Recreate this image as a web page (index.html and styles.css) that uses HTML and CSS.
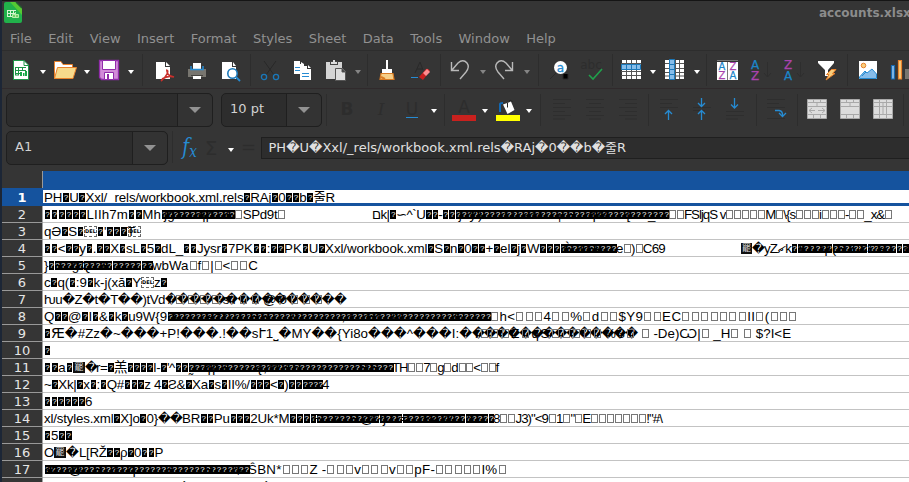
FILE: index.html
```html
<!DOCTYPE html>
<html lang="en">
<head>
<meta charset="utf-8">
<title>accounts.xlsx</title>
<link rel="stylesheet" href="styles.css">
</head>
<body>
<div class="window">
<header class="titlebar">
<svg class="logo" width="18" height="21" viewBox="0 0 18 21"><path fill="#21b14b" d="M2 0H12L18 6V19Q18 21 16 21H2Q0 21 0 19V2Q0 0 2 0Z"/><path fill="#55c934" d="M6 0H12L18 6V13Z"/><path stroke="#235b30" stroke-width="1.5" d="M12 0L18 6"/><path stroke="#d6f5d2" fill="none" d="M3 8.500H12M3 11.500H12M3 14.500H9M3.500 8V14M6.500 8V14M9.500 8V14"/><path fill="#6fd165" stroke="#b7eea9" d="M8.500 12.500H14.500V15.500H8.500ZM11.500 10V15"/></svg>
<span class="title">accounts.xlsx</span>
</header>
<nav class="menu"><span>File</span><span>Edit</span><span>View</span><span>Insert</span><span>Format</span><span>Styles</span><span>Sheet</span><span>Data</span><span>Tools</span><span>Window</span><span>Help</span></nav>
<div class="toolbar standard">
<svg class="i" viewBox="0 0 24 24"><path fill="#fff" stroke="#1d9546" d="M4.500 2.500H15L19.500 7V21.500H4.500Z"/><path fill="none" stroke="#1d9546" d="M15 2.500V7.500H19.500M6 9.500H17M6 12.500H17M6 15.500H12M6.500 9V17M9.500 9V17M13.500 9V13M6 17H10"/><path fill="#18a846" d="M11 14h2v4h-2zM14 15h1.500v3H14zM16 13h2v5h-2z"/></svg><i class="dd"></i>
<svg class="i" viewBox="0 0 24 24"><path fill="#fff" stroke="#e8812b" d="M1.500 20.500V3.500H8L10 6.500H19.500V10"/><path fill="#f7da8c" stroke="#e8812b" d="M1.500 20.500L4.500 9.500H23.500L20 20.500Z"/></svg><i class="dd"></i>
<svg class="i" viewBox="0 0 24 24"><path fill="#d18bd8" stroke="#912caa" stroke-width="1.300" d="M2.500 2.500H21.500V21.500H4.500L2.500 19.500Z"/><path fill="#fff" stroke="#912caa" d="M5.500 2.500H18.500V11.500H5.500ZM7.500 14.500H16.500V21.500H7.500Z"/><path fill="#912caa" d="M10 16h2v5h-2z"/></svg><i class="dd"></i>
<s class="w11"></s>
<svg class="i" viewBox="0 0 24 24"><path fill="#fff" d="M4 4H13V9H18V21H4ZM14 4L18 8H14Z"/><path fill="none" stroke="#c9302c" stroke-width="1.600" d="M14 12Q17 12 15 16Q13 20 9 23M15 12Q14 17 22 19Q16 17 10 21"/></svg>
<svg class="i" viewBox="0 0 24 24"><path fill="#77756f" d="M3 11H21V19H3Z"/><path fill="#fff" d="M8 5H16V11H8ZM8 18H16V21H8Z"/><path fill="none" stroke="#268bd2" stroke-width="1.500" d="M6 8V11.500H18V8"/><path stroke="#45433f" d="M6 17.500H18"/></svg>
<svg class="i" viewBox="0 0 24 24"><path fill="#fff" d="M4 4H14V9H18V21H4ZM15 4L18 8H15Z"/><circle cx="14.500" cy="15.500" r="4.700" fill="#fff" stroke="#1b78b9" stroke-width="1.600"/><path stroke="#268bd2" stroke-width="1.800" d="M18 19L22 23"/></svg>
<s class="w7"></s>
<svg class="i" viewBox="0 0 24 24"><path stroke="#282828" fill="none" d="M6 3L16 17M18 3L8 17"/><g fill="none" stroke="#1b78b9" stroke-width="1.300"><circle cx="6" cy="19" r="2.600"/><circle cx="18" cy="19" r="2.600"/></g></svg>
<svg class="i" viewBox="0 0 24 24"><path fill="#fff" d="M3 3H9V6H13V16H3ZM10 4L13 6H10ZM9 8H16V11H20V22H9ZM17 7L20 10H17Z"/><path stroke="#268bd2" d="M4 9.500H9M4 12.500H9M11 15.500H18M11 18.500H18"/></svg>
<svg class="i" viewBox="0 0 24 24"><path fill="#d4d4d4" d="M2 4H18V21H2Z"/><path fill="#444" d="M6 3H14V7H6Z"/><path fill="#ddd" d="M7 4h2V2h2v2h2v2H7z"/><path fill="#ddd" stroke="#555" d="M11.500 10.500H18L21.500 14V22.500H11.500ZM18 10V14H22"/></svg><i class="dd off"></i>
<s class="w7"></s>
<svg class="i" viewBox="0 0 24 24"><path fill="#fff" d="M11 2h2v9h4v4H7v-4h4z"/><path fill="#f7cf88" stroke="#d97b24" stroke-width="1.200" d="M6 15.500H18L19 21.500H5Z"/><path stroke="#d97b24" stroke-width="2" d="M6 19L10 21"/></svg>
<svg class="i" viewBox="0 0 24 24"><path stroke="#292929" fill="none" d="M7 15L12 4L15 12M9 11H14"/><path stroke="#268bd2" d="M3 19.500H10"/><path fill="#c81f1f" d="M11 19L18 11Q20 10 22 13L15 22Z"/><path fill="#ff8c90" d="M15 15L19 11L22 14L18 18Z"/></svg>
<s class="w8"></s>
<svg class="i" viewBox="0 0 24 24"><path fill="none" stroke="#b9b9b9" stroke-width="1.400" d="M2.500 4V12.500H10M3 12L9 5Q14 .5 18 5Q21 9 17 14L11 21"/></svg><i class="dd off"></i>
<svg class="i" viewBox="0 0 24 24"><path fill="none" stroke="#b9b9b9" stroke-width="1.400" d="M19.500 4V12.500H12M19 12L13 5Q8 .5 4 5Q1 9 5 14L11 21"/></svg><i class="dd off"></i>
<s class="w11"></s>
<svg class="i" viewBox="0 0 24 24"><path stroke="#292929" d="M2 21L8 15M15 16V21H20V16"/><circle cx="12.500" cy="9.500" r="6.500" fill="#fff"/><text x="12.500" y="13.500" class="find">a</text></svg>
<svg class="i" viewBox="0 0 24 24"><text x="10" y="11" class="abc">abc</text><path fill="none" stroke="#20a04b" stroke-width="1.600" d="M8 17L12 21L21 11"/></svg>
<s class="w5"></s>
<svg class="i" viewBox="0 0 24 24"><path fill="#fff" d="M3 2H22V21H3Z"/><path stroke="#555" d="M2 5.500H22M2 13.500H22M2 17.500H22M7.500 2V21M12.500 2V21M17.500 2V21"/><path fill="#87bdea" stroke="#1b78b9" d="M2.500 6.500H21.500V11.500H2.500ZM7.500 6V11M12.500 6V11M17.500 6V11"/></svg><i class="dd"></i>
<svg class="i" viewBox="0 0 24 24"><path fill="#fff" d="M2 2H21V21H2Z"/><path stroke="#555" d="M2 5.500H21M2 10.500H21M2 14.500H21M2 18H21M6.500 2V21M12.500 2V21M16.500 2V21"/><path fill="#87bdea" stroke="#1b78b9" d="M6.500 1.500H11.500V21.500H6.500ZM6 6.500H11M6 11.500H11M6 16.500H11"/></svg><i class="dd"></i>
<s class="w8"></s>
<svg class="i" viewBox="0 0 24 24"><path fill="#fff" d="M2 4H23V22H2Z"/><path stroke="#777" d="M2 2.500H23M12.500 4V22"/><g class="az"><text x="7" y="12">A</text><text x="18" y="21">A</text><text x="7" y="21" class="z">Z</text><text x="18" y="12" class="z">Z</text></g></svg>
<svg class="i" viewBox="0 0 24 24"><g class="az big"><text x="7" y="11">A</text><text x="7" y="22" class="z">Z</text></g><path class="faint" d="M19.500 4V19M16 15L19.500 19L23 15"/></svg>
<svg class="i" viewBox="0 0 24 24"><g class="az big"><text x="7" y="11" class="z">Z</text><text x="7" y="22">A</text></g><path class="faint" d="M19.500 4V19M16 15L19.500 19L23 15"/></svg>
<svg class="i" viewBox="0 0 24 24"><path fill="#fff" d="M4 3H20V5L14 12V18H11V12L4 5Z"/><path fill="#f8ce7d" stroke="#e8812b" d="M17.500 11.500H22L18.500 15.500H21L12 22L15 16.500H12.500Z"/></svg>
<s class="w9"></s>
<svg class="i" viewBox="0 0 24 24"><path fill="#fff" d="M3 3H21V21H3Z"/><circle cx="7.500" cy="7.500" r="2.300" fill="#f8ce7d" stroke="#e8812b"/><path fill="#87bdea" stroke="#268bd2" d="M3.500 20.500V19L9 13L11 15L16 11L20.500 16V20.500ZM6 18L10 14"/></svg>
<svg class="i" viewBox="0 0 24 24"><path fill="#87bdea" stroke="#1768b0" stroke-width="1.200" d="M2.500 7.500H5.500V21H2.500Z"/><path fill="#f8ce7d" stroke="#e8812b" stroke-width="1.200" d="M9.500 2.500H12.500V21H9.500Z"/><path fill="#77756f" d="M16 11H20V21H16Z"/></svg>
</div>
<div class="toolbar formatting">
<div class="combo font"><span></span><b></b></div>
<div class="combo size"><span>10 pt</span><b></b></div>
<s class="w8h"></s>
<svg class="i" viewBox="0 0 24 24"><text x="12" y="18" class="glyph bold">B</text></svg>
<svg class="i" viewBox="0 0 24 24"><text x="13" y="18" class="glyph ital">I</text></svg>
<svg class="i" viewBox="0 0 24 24"><text x="11" y="18" class="glyph">U</text><path stroke="#268bd2" d="M5 20.500H17"/></svg><i class="dd"></i>
<s class="w7"></s>
<svg class="i" viewBox="0 0 24 24"><text x="12" y="16" class="glyph">A</text><path fill="#c9211e" d="M0 18H24V24H0Z"/></svg><i class="dd"></i>
<svg class="i" viewBox="0 0 24 24"><path fill="#ff0" d="M0 18H24V24H0Z"/><path fill="none" stroke="#1268b3" stroke-width="2" d="M4 15V7Q4 6 7 6"/><path fill="#fff" d="M7 7.500L15 4.500L18.500 13L11.500 17Z"/><path fill="none" stroke="#242424" d="M11.500 10.500V6M13 4Q15 2 16.500 5"/></svg><i class="dd"></i>
<s class="w10"></s>
<svg class="i" viewBox="0 0 24 24"><path class="faint" d="M3 2.500H21M3 6.500H15M3 10.500H21M3 14.500H15M3 18.500H21M3 22H15"/></svg>
<svg class="i" viewBox="0 0 24 24"><path class="faint" d="M3 2.500H21M6 6.500H18M3 10.500H21M6 14.500H18M3 18.500H21M6 22H18"/></svg>
<svg class="i" viewBox="0 0 24 24"><path class="faint" d="M3 2.500H21M9 6.500H21M3 10.500H21M9 14.500H21M3 18.500H21M9 22H21"/></svg>
<s class="w8"></s>
<svg class="i" viewBox="0 0 24 24"><path class="faint" d="M3 2.500H21M3 6.500H15M3 10.500H21"/><path class="arrow" d="M11.500 23V13.500M8 17L11.500 13.500L15 17"/></svg>
<svg class="i" viewBox="0 0 24 24"><path class="faint" d="M3 10.500H21M3 13.500H15"/><path class="arrow" d="M11.500 1V9M8 6L11.500 9.500L15 6M11.500 23V14M8 17L11.500 13.500L15 17"/></svg>
<svg class="i" viewBox="0 0 24 24"><path class="faint" d="M3 14.500H21M3 18.500H21M3 22H15"/><path class="arrow" d="M11.500 1V11M8 7.500L11.500 11L15 7.500"/></svg>
<s class="w10"></s>
<svg class="i" viewBox="0 0 24 24"><path class="faint" d="M1 2.500H19M1 6.500H13M1 10.500H19M1 21.500H19"/><path class="arrow" d="M9 13.500H13Q17 14 16.500 19M13 16L16.500 19.500L20 16"/></svg>
<s class="w6"></s>
<svg class="i" viewBox="0 0 24 24"><path class="cells" d="M2.500 2.500H21.500V21.500H2.500ZM2 5.500H22M2 9.500H22M2 17.500H22M8.500 2V5M15.500 2V5M8.500 17V22M15.500 17V22M12 5V9"/><path class="cellarrow" d="M4 13.500H10M7 11L4 13.500L7 16M13 13.500H20M17 11L20 13.500L17 16"/></svg>
<svg class="i" viewBox="0 0 24 24"><path class="cells" d="M2.500 2.500H21.500V21.500H2.500ZM2 5.500H22M2 9.500H22M2 17.500H22M8.500 2V5M15.500 2V5M8.500 17V22M15.500 17V22M12 5V9"/></svg>
<svg class="i" viewBox="0 0 24 24"><path class="cells" d="M2.500 2.500H21.500V21.500H2.500ZM2 5.500H22M2 9.500H22M2 17.500H22M8.500 2V22M15.500 2V22M12 5V17"/></svg>
<s class="w8"></s>
</div>
<div class="formula">
<div class="combo name"><span>A1</span><b></b></div>
<s class="w8"></s>
<div class="fx">f<sub>x</sub></div><div class="sigma">Σ</div><i class="dd"></i><div class="eq">=</div>
<div class="input">PH�U�Xxl/_rels/workbook.xml.rels�RAj�0��b�줄R</div>
</div>
<div class="colhead"><div class="corner"></div><div class="col"></div></div>
<main class="sheet" id="sheet"></main>
</div>
<script src="sheet.js"></script>
</body>
</html>
```
FILE: styles.css
```css
* { box-sizing: border-box; }
body { margin: 0; width: 909px; height: 482px; overflow: hidden; background: #353535; font: 13px "DejaVu Sans", "Noto Sans CJK KR", sans-serif; }
.window { height: 482px; border-left: 2px solid #1c2636; overflow: hidden; display: flex; flex-direction: column; }
.titlebar { height: 26px; flex: none; border-top: 1px solid #151515; display: flex; justify-content: space-between; padding-left: 2px; color: #8c8c8c; overflow: hidden; }
.logo { margin-top: 1px; flex: none; }
.title { font: bold 12px/24px "DejaVu Sans", sans-serif; width: 90px; white-space: nowrap; flex: none; overflow: hidden; }
.menu { height: 25px; flex: none; display: flex; gap: 16.4px; padding-left: 8px; line-height: 25px; color: #919191; border-bottom: 1px solid #2d2d2d; }
.toolbar { display: flex; flex: none; align-items: center; overflow: hidden; }
.standard { height: 38px; padding-left: 2.5px; border-bottom: 1px solid #302a2c; }
.formatting { height: 41px; padding-left: 4px; }
.i { width: 24px; height: 24px; margin: 0 4.5px; flex: none; overflow: visible; }
.formatting .i { margin: 0 5px 2px 4px; }
.dd { width: 11px; flex: none; display: flex; justify-content: center; }
.dd::after { content: ""; margin-top: 4px; border: 3.5px solid transparent; border-top: 4px solid #fff; border-bottom: 0; }
.formatting .dd::after { margin: 2px 2px 0 0; }
.off::after { border-top-color: #858585; }
s { height: 32px; flex: none; background: linear-gradient(#2d2d2d, #2d2d2d) center / 1px 100% no-repeat; }
.w5 { width: 5px; } .w6 { width: 6px; } .w7 { width: 7px; } .w8 { width: 8px; } .w8h { width: 8.5px; }
.w9 { width: 9px; } .w10 { width: 10px; } .w11 { width: 11px; }
.combo { height: 34px; flex: none; display: flex; border: 1px solid #1f1f1f; border-radius: 5px; background: #2d2d2d; color: #d2d2d2; }
.combo span { flex: 1; line-height: 30px; padding-left: 8px; }
.combo b { width: 35px; border-left: 1px solid #1f1f1f; background: #333; border-radius: 0 5px 5px 0; display: flex; align-items: center; justify-content: center; }
.combo b::after { content: ""; border: 6px solid transparent; border-top-color: #929292; border-bottom: 0; }
.font { width: 207px; margin-right: 8px; }
.size { width: 101px; }
.name { width: 162px; }
.find { font: 12px "DejaVu Sans"; fill: #268bd2; stroke: #268bd2; stroke-width: .3; text-anchor: middle; }
.abc { font: 12px "DejaVu Sans"; fill: #2d2d2d; text-anchor: middle; }
.az { font: 10px "DejaVu Sans"; text-anchor: middle; fill: #1b86c9; stroke: #1b86c9; stroke-width: .25; }
.big { font-size: 12px; }
.az .z { fill: #a943ad; stroke: #a943ad; }
.glyph { font: 17px "DejaVu Sans"; fill: #2d2d2d; text-anchor: middle; }
.bold { font-weight: bold; }
.ital { font-family: "DejaVu Serif"; font-style: italic; }
.faint { stroke: #2e2e2e; fill: none; }
.arrow { stroke: #268bd2; fill: none; stroke-width: 1.3; }
.cells { fill: #ddd; stroke: #a9a9a9; }
.cellarrow { fill: none; stroke: #aaa; }
.formula { height: 42px; flex: none; display: flex; align-items: flex-start; padding: 1px 0 0 4px; }
.formula .dd { height: 34px; align-items: center; margin-left: 3px; }
.fx { width: 24px; padding-left: 6px; font: italic 22px/32px "DejaVu Serif"; color: #268bd2; white-space: nowrap; transform: scaleX(.85); transform-origin: 8px 0; }
.fx sub { font-size: 16px; line-height: 0; vertical-align: -3px; }
.sigma { width: 22px; font: 20px/34px "DejaVu Sans"; color: #2d2d2d; text-align: center; }
.eq { width: 25px; font: 18px/32px "DejaVu Sans"; color: #2d2d2d; text-align: center; }
.input { flex: 1; height: 22px; margin-top: 6px; border: 1px solid #1f1f1f; border-right: 0; background: #2d2d2d; color: #e0e0e0; line-height: 19px; padding-left: 6.5px; white-space: nowrap; overflow: hidden; letter-spacing: .02px; }
.colhead { display: flex; height: 17px; flex: none; margin-top: -1px; }
.corner { width: 41px; border-right: 1px solid #999; }
.col { flex: 1; background: #15539e; }
.sheet { flex: none; background: #fff; }
.row { display: flex; height: 17px; }
.num { width: 41px; flex: none; border-right: 1px solid #a4a4a4; border-bottom: 1px solid #999; background: #353535; color: #e5e5e5; text-align: center; line-height: 17px; }
.cell { flex: 1; height: 17px; display: flex; padding-left: 1px; border-bottom: 1px solid #c3c3c3; font: 13.333px/18px "Liberation Sans", "DejaVu Sans", "Noto Sans CJK KR", sans-serif; color: #000; overflow: hidden; }
.active { height: 18px; }
.active .num { background: #15539e; color: #fff; font-weight: bold; height: 18px; border-color: #15539e; line-height: 19px; }
.active .cell { height: 18px; border-top: 2px solid #15539e; border-bottom: 3px solid #15539e; line-height: 16px; }
.seg { flex: none; position: relative; white-space: pre; direction: ltr; unicode-bidi: bidi-override; height: 17px; letter-spacing: var(--gap, 0); }
.diamond { font: 12.5px/1 "DejaVu Sans"; }
.narrow, .box { display: inline-block; height: 9px; letter-spacing: 0; vertical-align: 0; line-height: 9px; overflow: hidden; }
.narrow { position: relative; width: 5.6px; margin: 0 calc(var(--gap, 0px) + .6px) 0 .8px; background: #000; color: #000; font-size: 6px; }
.narrow::before { content: "?"; position: absolute; inset: 0; color: #fff; font: 8px/9px "Liberation Sans"; text-align: center; }
.box { width: 7px; margin: 0 calc(var(--gap, 0px) + 1px) 0 1px; border: 1px solid #777; color: transparent; font-size: 7px; }
.over { position: absolute; left: 3px; top: 0; }
.del { height: 11px; margin-top: 3px; border: 1px dashed #666; font: bold 5px/9px "DejaVu Sans"; text-align: center; }
.block { height: 11px; margin-top: 3px; background: #111; color: #ddd; font: 9px/10px "Noto Sans CJK SC"; text-align: center; overflow: hidden; }
```
FILE: sheet.js
```js
const n = count => "�".repeat(count);
// Each run: [text, width in px, kind, overprinted text]
const del = ["DEL", 13, "del"];
const gap = width => ["", width, "gap"];
const rows = [
  [["PH�U�Xxl/_rels/workbook.xml.rels�RAj�0��b�줄R", 291]],
  [["������LIIh7m��Mh", 117], [n(13), 73, "", "jgэ    qp   F"], ["□SPd9t□", 52], gap(86), ["םk|�∽^`U��-��", 83], [n(38), 213, "", "} y)   JJ 2M  ┌H  qM   [   _  "], ["□□FSljqS v□□□□□M□\\{s□□□i□□□-□□_x&□", 224]],
  [["qƏ�S�", 40], del, ["�'���", 30], ["T", 1], del],
  [["��<��y�.��X�sL�5�dL_��Jysr�7PK��:��PK�U�Xxl/workbook.xml�S�n�0��+�el�j�W���", 516], [n(10), 56, "", "Ѐ ТFk   "], ["e□)□C69", 49], gap(76), ["罷", 11, "block"], ["�", 12, "wide"], ["yZޗk", 27], [n(21), 122, "", " KILЏ(H �<�P    d"]],
  [["}", 4], [n(18), 104, "", " + gQГE       "], ["wbWa□f□|□<□□C", 106]],
  [["c�q(�:9�k-j(xă�Y", 97], del, ["z�", 13]],
  [["ƕu�Z�t�T��)tVd", 121, "wide"], [n(15), 181, "wide", "/□□□□sI□□@0□□□   "]],
  [["Q��@�I�&�k�u9W{9", 123], [n(58), 323, "", "a     Pzf  UHR    9        ,1  Ht  N          E     "], ["□h<□□□4□□%□d□□$Y9□□EC□□□□□□□II□(□□□", 308]],
  [["�", 7], ["Ԙ�#Zz�~���+P!���.!��sՒ1˽�MY��{Yi8o���^���I:�", 421, "wide"], [n(14), 165, "wide", "i□□□Z□qS□□□□□%3□"], [" □ -De)Ѡ|□ _H□ □ $?I<E", 154]],
  [["�", 7]],
  [["��a�", 29], ["罷", 12, "block"], ["�", 11, "wide"], ["r=�羔����I-�'^��", 92], [n(37), 204, "", "̰  qp+     {,W+6           HE  "], ["TH□□7□g□d□□<□□f", 106]],
  [["~�Xk|�x�:�Q#���z 4�Ƨ&�Xa�s�II%/���<�)��", 258], [n(4), 20], ["4", 7]],
  [[n(6), 41], ["6", 7]],
  [["xl/styles.xml�X]o�0}", 114], ["��", 24, "wide"], ["BR��Pu���2Uk*M���", 128], [n(32), 183, "", "F  &  H@?jZ =   B4W   x    "], ["8□□J3)\"<9□1□\"□E□□□□□□□!\"#\\", 169]],
  [["�5��", 28]],
  [["O", 10], ["罷", 12, "block"], ["�", 13, "wide"], ["L[RŽ��ρ�0��P", 84]],
  [[n(37), 204, "", "łz  @  R  f  q      +      H    $ "], ["ŜBN*□□□Z -□□□v□□□v□□pF-□□□□□I%□", 259]],
  [gap(138), ["´", 82], ["´", 6]]
];

function fill(target, text, wide) {
  for (const part of text.split(/([�□])/).filter(Boolean)) {
    const piece = document.createElement("span");
    if (part === "�") piece.className = wide ? "diamond" : "narrow";
    if (part === "□") piece.className = "box";
    piece.textContent = part;
    target.append(piece);
  }
}

// Spread or squeeze the glyphs so the run fills its measured width.
function fit(target, text, width) {
  if (text.length < 2) return;
  const natural = target.getBoundingClientRect().width;
  target.style.setProperty("--gap", (width - natural) / text.length + "px");
  target.style.letterSpacing = "var(--gap)";
}

const sheet = document.getElementById("sheet");
rows.forEach((runs, index) => {
  const row = document.createElement("div");
  row.className = index ? "row" : "row active";
  const num = document.createElement("div");
  num.className = "num";
  num.textContent = index + 1;
  const cell = document.createElement("div");
  cell.className = "cell";
  row.append(num, cell);
  sheet.append(row);
  for (const [text, width, kind = "", over] of runs) {
    const seg = document.createElement("span");
    seg.className = "seg " + kind;
    cell.append(seg);
    const fixed = kind === "del" || kind === "block";
    if (fixed) {
      seg.textContent = text;
    } else {
      const main = document.createElement("span");
      seg.append(main);
      fill(main, text, kind === "wide");
      fit(main, text, width);
    }
    seg.style.width = width + "px";
    if (over) {
      const top = document.createElement("span");
      top.className = "over";
      seg.append(top);
      fill(top, over, false);
      fit(top, over, width - 3);
    }
  }
});
```
